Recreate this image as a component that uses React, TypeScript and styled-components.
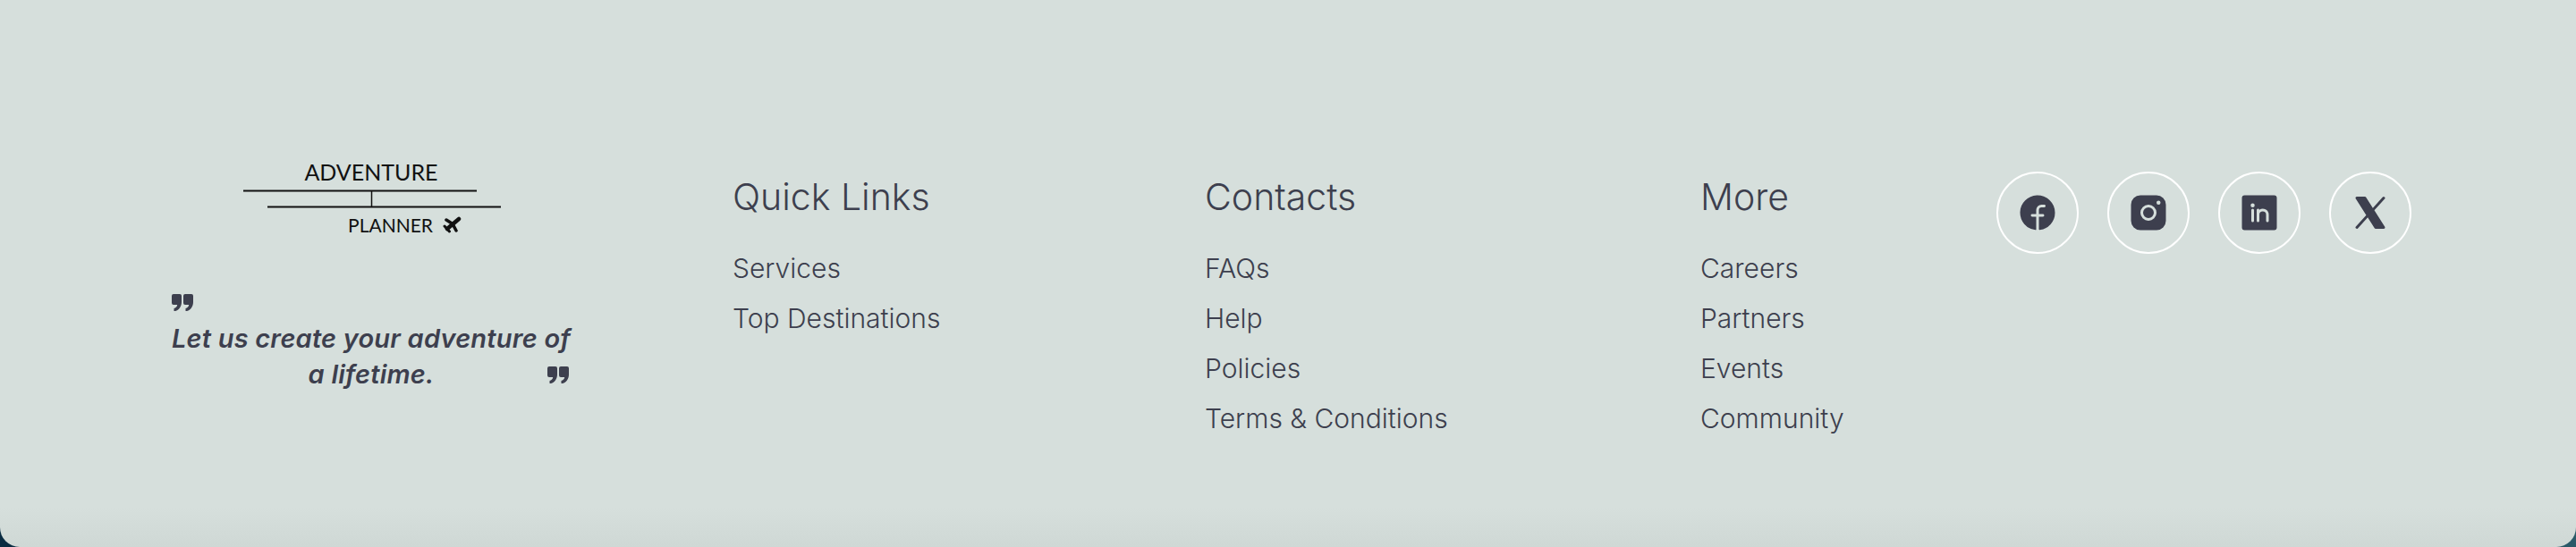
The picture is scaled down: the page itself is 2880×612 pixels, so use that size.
import * as React from 'react'
import styled, { createGlobalStyle } from 'styled-components'
import { PiFacebookLogoFill, PiInstagramLogoFill, PiLinkedinLogoFill, PiXLogoFill } from 'react-icons/pi'

const quickLinks = ['Services', 'Top Destinations']
const contacts = ['FAQs', 'Help', 'Policies', 'Terms & Conditions']
const more = ['Careers', 'Partners', 'Events', 'Community']

const quoteMark =
  'M2 0h7a2 2 0 0 1 2 2v7c0 5-3 9-7 10H2.5v-3c2-.5 3.5-2 3.7-4H2a2 2 0 0 1-2-2V2a2 2 0 0 1 2-2z'

function QuoteMark({ className }: { className?: string }) {
  return (
    <svg className={className} width="24" height="19" viewBox="0 0 24 19" fill="currentColor">
      <path d={quoteMark} />
      <path d={quoteMark} transform="translate(13 0)" />
    </svg>
  )
}

function Logo() {
  return (
    <LogoSvg width="290" height="92" viewBox="0 0 290 92">
      <LogoText x="143" y="30" fontSize="25">ADVENTURE</LogoText>
      <LogoText x="164.5" y="88" fontSize="21">PLANNER</LogoText>
      <line x1="0" y1="41.5" x2="261" y2="41.5" stroke="#111" strokeWidth="2" />
      <line x1="27" y1="59.5" x2="288" y2="59.5" stroke="#111" strokeWidth="2" />
      <line x1="143.5" y1="42" x2="143.5" y2="59" stroke="#111" strokeWidth="1.5" />
      <g transform="translate(223 70)" stroke="#111" strokeLinecap="round" fill="none">
        <path d="M18 3L5 14" strokeWidth="4.5" />
        <path d="M4 4L11 8.5L15 16" strokeWidth="3.5" />
        <path d="M2 11L7.5 17" strokeWidth="3" />
      </g>
    </LogoSvg>
  )
}

function LinkColumn({ title, links, width }: { title: string; links: string[]; width: number }) {
  return (
    <Column $width={width}>
      <Heading>{title}</Heading>
      <LinkList>
        {links.map((link) => (
          <li key={link}>
            <FooterLink href="#">{link}</FooterLink>
          </li>
        ))}
      </LinkList>
    </Column>
  )
}

export default function App() {
  return (
    <>
      <GlobalStyle />
      <Footer>
        <Brand>
          <LogoWrap>
            <Logo />
          </LogoWrap>
          <Quote>
            <OpenQuote />
            <QuoteText>Let us create your adventure of a lifetime.</QuoteText>
            <CloseQuote />
          </Quote>
        </Brand>
        <LinkColumn title="Quick Links" links={quickLinks} width={528} />
        <LinkColumn title="Contacts" links={contacts} width={554} />
        <LinkColumn title="More" links={more} width={331} />
        <Socials>
          <SocialLink href="#"><PiFacebookLogoFill /></SocialLink>
          <SocialLink href="#"><PiInstagramLogoFill /></SocialLink>
          <SocialLink href="#"><PiLinkedinLogoFill /></SocialLink>
          <SocialLink href="#"><PiXLogoFill /></SocialLink>
        </Socials>
      </Footer>
    </>
  )
}

const GlobalStyle = createGlobalStyle`
  html, body {
    margin: 0;
    padding: 0;
    height: 612px;
    overflow: hidden;
    background: linear-gradient(90deg, #0a2c42, #2a5a68);
  }
`

const Footer = styled.footer`
  box-sizing: border-box;
  display: flex;
  align-items: flex-start;
  height: 612px;
  padding: 172px 0 0 190px;
  background: linear-gradient(#d6dfdc calc(100% - 44px), #cfd8d5);
  border-radius: 0 0 22px 22px;
  color: #3d3f4e;
  font-family: 'Inter', 'Open Sans', sans-serif;
`

const Brand = styled.div`
  display: flex;
  flex-direction: column;
  width: 629px;
  flex: none;
`

const LogoWrap = styled.div`
  width: 450px;
  display: flex;
  padding-left: 82px;
  box-sizing: border-box;
`

const LogoSvg = styled.svg`
  display: block;
  overflow: visible;
`

const LogoText = styled.text`
  font-family: 'Lato', 'Liberation Sans', sans-serif;
  font-weight: 400;
  fill: #111;
  text-anchor: middle;
`

const Quote = styled.div`
  position: relative;
  width: 450px;
  margin-top: 65px;
`

const OpenQuote = styled(QuoteMark)`
  display: block;
  margin-left: 2px;
`

const CloseQuote = styled(QuoteMark)`
  position: absolute;
  right: 4px;
  bottom: 10px;
`

const QuoteText = styled.p`
  margin: 11px 0 0;
  text-align: center;
  font-size: 29px;
  line-height: 40px;
  font-weight: 600;
  font-style: italic;
  letter-spacing: 0.2px;
`

const Column = styled.div<{ $width: number }>`
  flex: none;
  width: ${(p) => p.$width}px;
`

const Heading = styled.h3`
  margin: 18px 0 0;
  font-size: 41px;
  line-height: 60px;
  font-weight: 350;
`

const LinkList = styled.ul`
  list-style: none;
  margin: 28px 0 0;
  padding: 0;
  display: flex;
  flex-direction: column;
  gap: 11px;
`

const FooterLink = styled.a`
  display: block;
  font-size: 30px;
  line-height: 45px;
  font-weight: 350;
  color: inherit;
  text-decoration: none;
`

const Socials = styled.div`
  display: flex;
  gap: 32px;
  margin: 20px 0 0;
`

const SocialLink = styled.a`
  box-sizing: border-box;
  width: 92px;
  height: 92px;
  border: 2px solid #fff;
  border-radius: 50%;
  display: flex;
  align-items: center;
  justify-content: center;
  color: inherit;
  font-size: 48px;
`
